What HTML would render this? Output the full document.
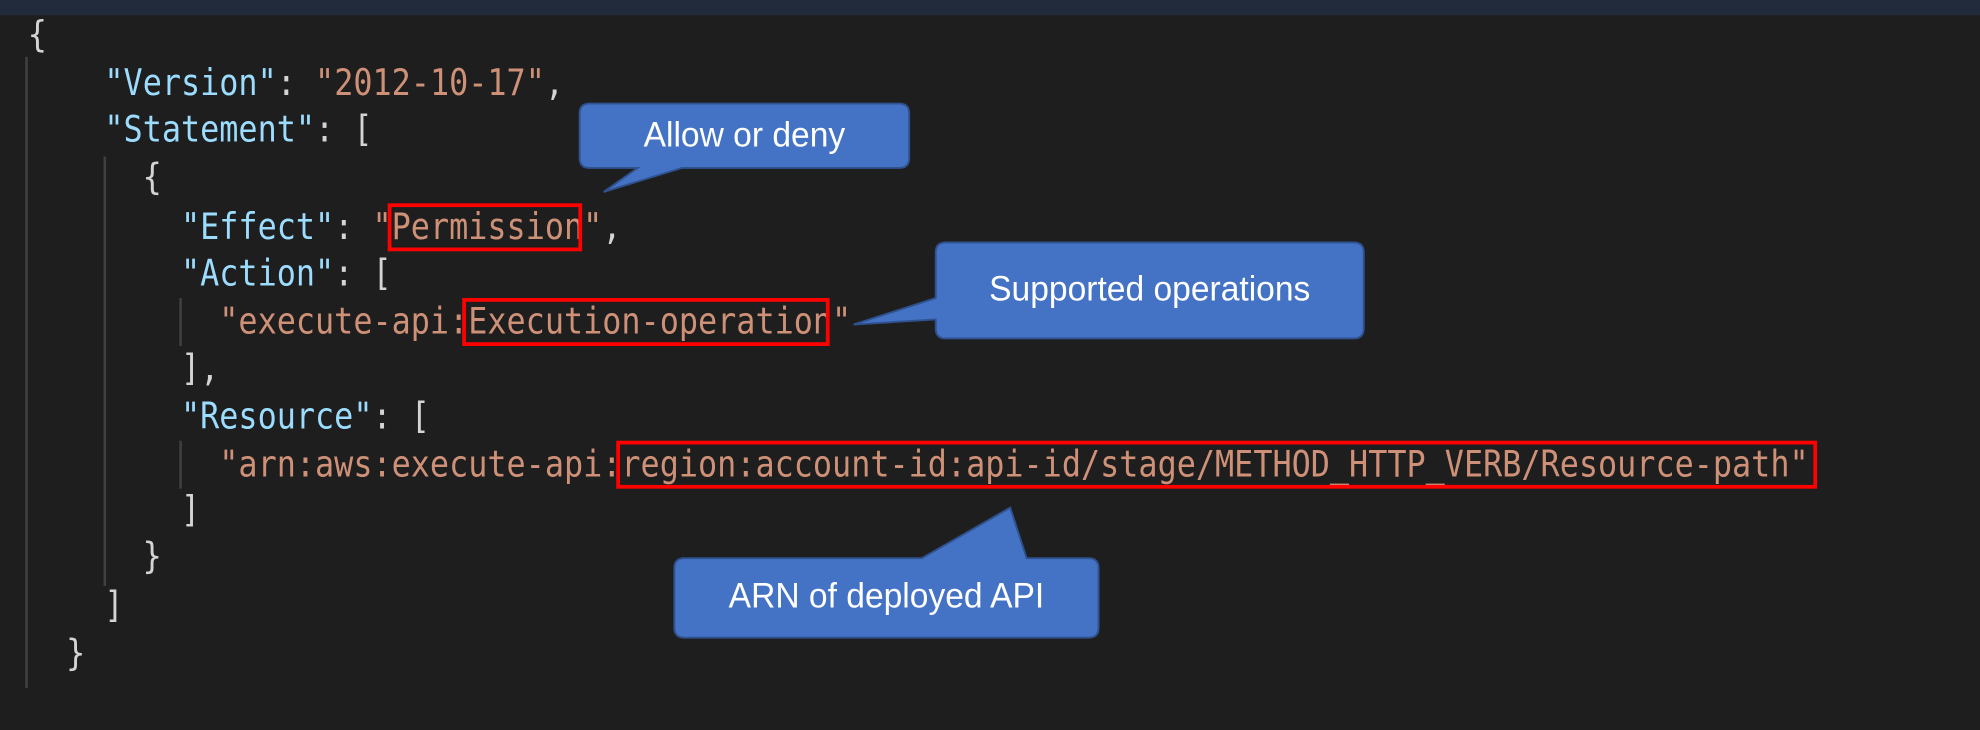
<!DOCTYPE html>
<html><head><meta charset="utf-8"><style>
html,body{margin:0;padding:0;background:#1e1e1e;overflow:hidden}
#w{position:relative;width:1568px;height:578px;transform:scale(1.26276);transform-origin:0 0;background:#1e1e1e;overflow:hidden}
.top{position:absolute;left:0;top:0;width:1568px;height:12px;background:#222b3b}
.ln{position:absolute;left:22px;font-family:"DejaVu Sans Mono","Liberation Mono",monospace;font-size:25.2px;white-space:pre;color:#d4d4d4;line-height:30px;transform:scaleY(1.15);transform-origin:0 50%}
.ln span.k{color:#9cdcfe}.ln span.s{color:#ce9178}
.g{position:absolute;width:1.5px;background:#404040}
.rb{position:absolute;border:3px solid #f00;box-sizing:border-box}
.ct{position:absolute;font-family:"Liberation Sans",sans-serif;color:#fff;font-size:28px;text-align:center;transform:scaleX(0.95)}
</style></head><body><div id="w">
<div class="top"></div>
<div class="g" style="left:20px;top:45px;height:500px"></div>
<div class="g" style="left:82px;top:124px;height:340px"></div>
<div class="g" style="left:142px;top:236px;height:38px"></div>
<div class="g" style="left:142px;top:349px;height:38px"></div>
<div class="ln" style="top:13px">{</div>
<div class="ln" style="top:51px">    <span class="k">"Version"</span>: <span class="s">"2012-10-17"</span>,</div>
<div class="ln" style="top:88px">    <span class="k">"Statement"</span>: [</div>
<div class="ln" style="top:126px">      {</div>
<div class="ln" style="top:165px">        <span class="k">"Effect"</span>: <span class="s">"Permission"</span>,</div>
<div class="ln" style="top:202px">        <span class="k">"Action"</span>: [</div>
<div class="ln" style="top:240px">          <span class="s">"execute-api:Execution-operation"</span></div>
<div class="ln" style="top:277px">        ],</div>
<div class="ln" style="top:315px">        <span class="k">"Resource"</span>: [</div>
<div class="ln" style="top:353px">          <span class="s">"arn:aws:execute-api:region:account-id:api-id/stage/METHOD_HTTP_VERB/Resource-path"</span></div>
<div class="ln" style="top:389px">        ]</div>
<div class="ln" style="top:426px">      }</div>
<div class="ln" style="top:465px">    ]</div>
<div class="ln" style="top:503px">  }</div>
<div class="rb" style="left:307px;top:161px;width:154px;height:38px"></div>
<div class="rb" style="left:366px;top:236px;width:291px;height:38px"></div>
<div class="rb" style="left:488px;top:349px;width:951px;height:38px"></div>
<svg style="position:absolute;left:0;top:0" width="1568" height="578">
<g fill="#4472c4" stroke="#2f528f" stroke-width="1.5">
<path d="M467,82 H712 Q720,82 720,90 V125 Q720,133 712,133 H540 L478,152 L505,133 H467 Q459,133 459,125 V90 Q459,82 467,82 Z"/>
<path d="M749,192 H1072 Q1080,192 1080,200 V260 Q1080,268 1072,268 H749 Q741,268 741,260 V253 L676,257 L741,236 V200 Q741,192 749,192 Z"/>
<path d="M542,442 H730 L800,402 L813,442 H862 Q870,442 870,450 V497 Q870,505 862,505 H542 Q534,505 534,497 V450 Q534,442 542,442 Z"/>
</g></svg>
<div class="ct" style="left:459px;top:91px;width:261px">Allow or deny</div>
<div class="ct" style="left:741px;top:213px;width:339px">Supported operations</div>
<div class="ct" style="left:534px;top:456px;width:336px">ARN of deployed API</div>
</div></body></html>
